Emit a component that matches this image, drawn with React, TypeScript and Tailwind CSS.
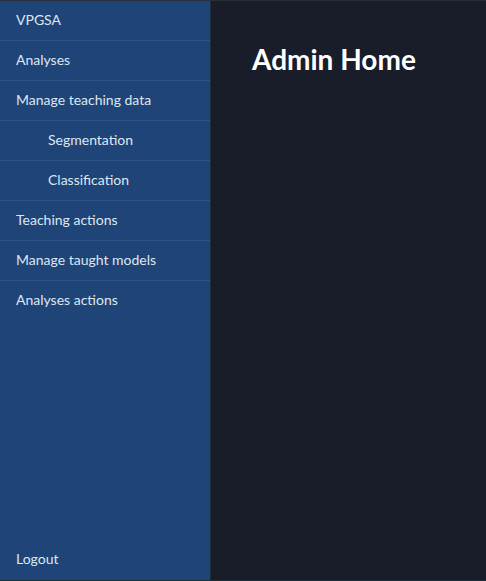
import React from "react";

const items: { label: string; sub?: boolean }[] = [
  { label: "VPGSA" },
  { label: "Analyses" },
  { label: "Manage teaching data" },
  { label: "Segmentation", sub: true },
  { label: "Classification", sub: true },
  { label: "Teaching actions" },
  { label: "Manage taught models" },
  { label: "Analyses actions" },
];

export default function App() {
  return (
    <div
      className="w-[486px] h-[581px] flex flex-col bg-[#181d29] border-t border-[#2a2e36] border-b border-b-[#1b3038]"
      style={{ fontFamily: "Lato, 'Open Sans', sans-serif" }}
    >
      <div className="flex flex-1 min-h-0">
        <nav className="w-[211px] bg-[#1e4478] border-r border-[#1b3038] flex flex-col text-[14px] text-[#dfe7f1]">
          {items.map((it, i) => (
            <div
              key={it.label}
              className={`h-10 flex items-center pb-[2px] border-b ${
                i < items.length - 1 ? "border-[#2d5488]" : "border-transparent"
              } ${it.sub ? "pl-12" : "pl-4"}`}
            >
              {it.label}
            </div>
          ))}
          <div className="flex-1" />
          <div className="h-10 flex items-center pl-4 pb-[2px] mb-[1px]">Logout</div>
        </nav>
        <main className="flex-1 pl-[41px] pt-[40px]">
          <h1 className="text-[28px] font-bold text-white leading-[36px]">
            Admin Home
          </h1>
        </main>
      </div>
    </div>
  );
}
